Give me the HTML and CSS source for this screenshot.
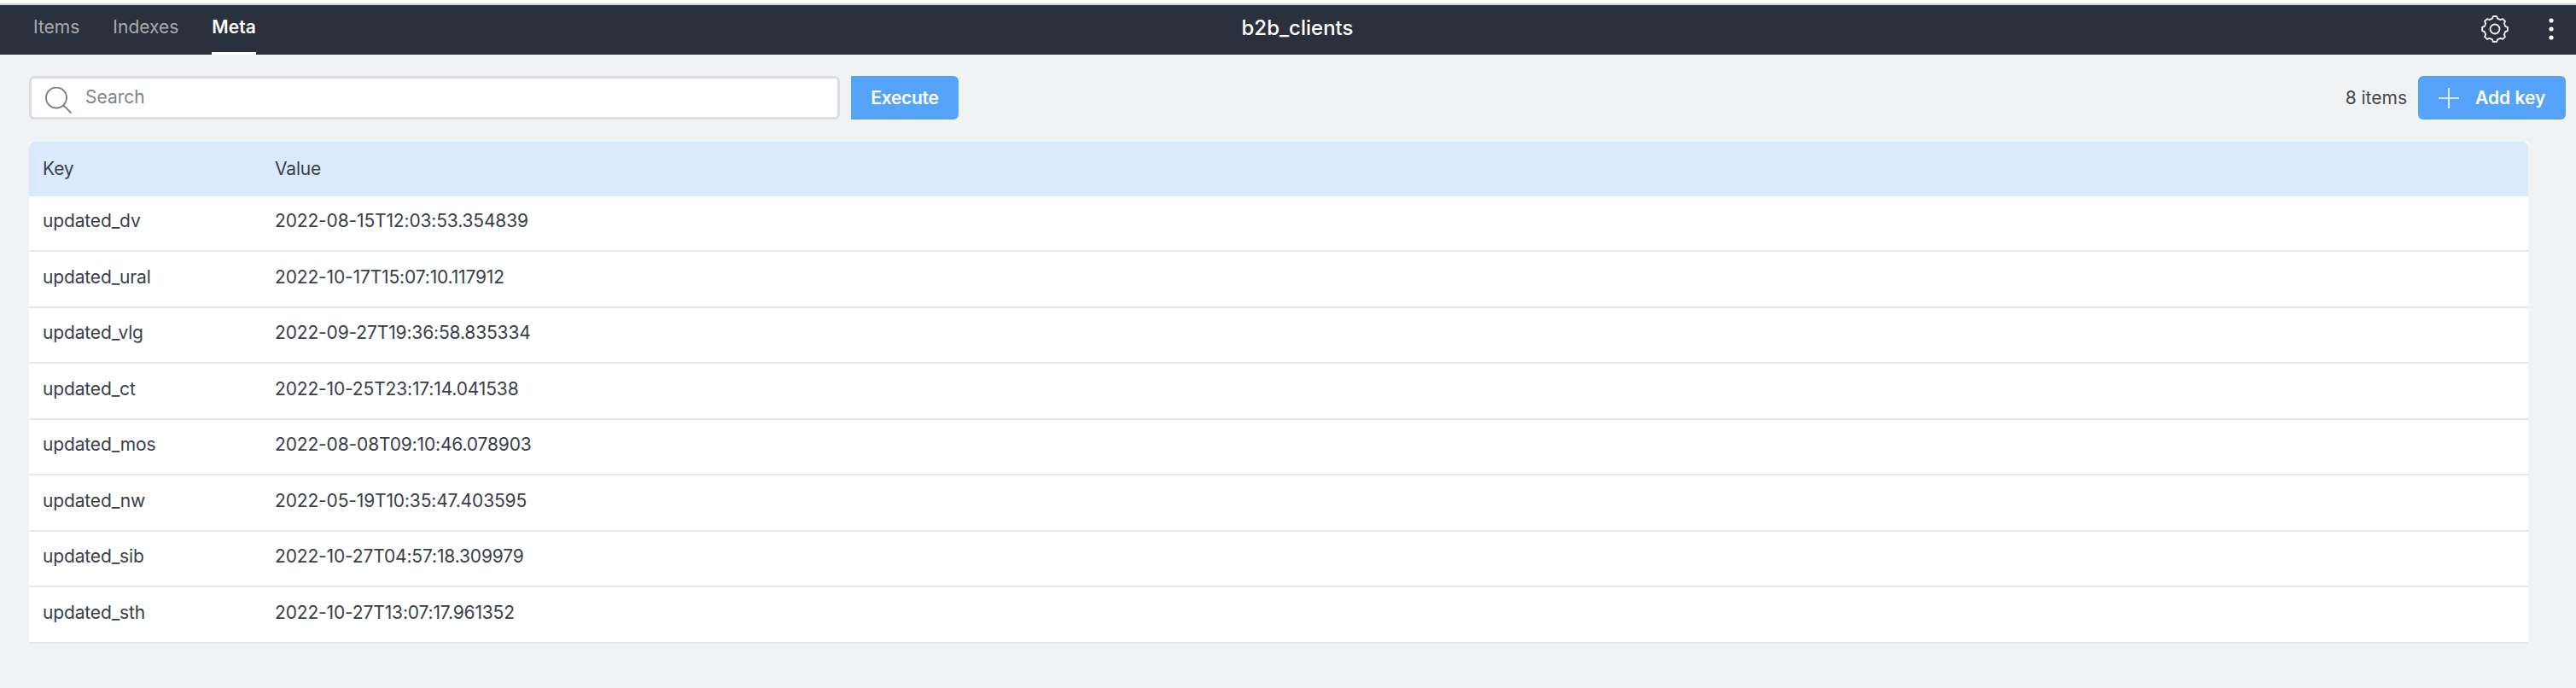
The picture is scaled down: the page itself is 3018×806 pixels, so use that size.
FILE: index.html
```html
<!DOCTYPE html>
<html lang="en">
<head>
<meta charset="utf-8">
<title>b2b_clients</title>
<link rel="stylesheet" href="styles.css">
</head>
<body>
<div class="topline"></div>
<header class="navbar">
  <nav class="tabs">
    <a class="tab">Items</a>
    <a class="tab">Indexes</a>
    <a class="tab active">Meta</a>
  </nav>
  <div class="title">b2b_clients</div>
  <div class="actions">
    <svg class="gear" viewBox="0 0 32 32" width="32" height="32" fill="none" stroke="#fff" stroke-width="1.8" stroke-linejoin="round">
      <path d="M28.23 12.95 L30.85 13.91 V18.09 L28.23 19.05 L26.8 22.49 L27.98 25.03 L25.03 27.98 L22.49 26.8 L19.05 28.23 L18.09 30.85 H13.91 L12.95 28.23 L9.51 26.8 L6.97 27.98 L4.02 25.03 L5.2 22.49 L3.77 19.05 L1.15 18.09 V13.91 L3.77 12.95 L5.2 9.51 L4.02 6.97 L6.97 4.02 L9.51 5.2 L12.95 3.77 L13.91 1.15 H18.09 L19.05 3.77 L22.49 5.2 L25.03 4.02 L27.98 6.97 L26.8 9.51 Z"/>
      <circle cx="16" cy="16" r="5.5"/>
    </svg>
    <svg class="dots" viewBox="0 0 6 26" width="6" height="26" fill="#fff">
      <circle cx="3" cy="3" r="2.6"/><circle cx="3" cy="13" r="2.6"/><circle cx="3" cy="23" r="2.6"/>
    </svg>
  </div>
</header>
<main class="content">
  <div class="toolbar">
    <label class="search">
      <svg class="search-icon" viewBox="0 0 31 31" width="31" height="31" fill="none" stroke="#7c818c" stroke-width="1.9">
        <circle cx="13" cy="12.5" r="12"/>
        <path d="M21.5 21.5 L30.5 30.5"/>
      </svg>
      <input class="search-input" type="text" placeholder="Search">
    </label>
    <button class="btn execute">Execute</button>
    <div class="spacer"></div>
    <span class="count">8 items</span>
    <button class="btn add">
      <svg viewBox="0 0 24 24" width="24" height="24" stroke="#fff" stroke-width="1.6" fill="none"><path d="M12 0 V24 M0 12 H24"/></svg>
      <span>Add key</span>
    </button>
  </div>
  <table class="grid">
    <thead>
      <tr><th class="col-key">Key</th><th>Value</th></tr>
    </thead>
    <tbody>
      <tr><td>updated_dv</td><td>2022-08-15T12:03:53.354839</td></tr>
      <tr><td>updated_ural</td><td>2022-10-17T15:07:10.117912</td></tr>
      <tr><td>updated_vlg</td><td>2022-09-27T19:36:58.835334</td></tr>
      <tr><td>updated_ct</td><td>2022-10-25T23:17:14.041538</td></tr>
      <tr><td>updated_mos</td><td>2022-08-08T09:10:46.078903</td></tr>
      <tr><td>updated_nw</td><td>2022-05-19T10:35:47.403595</td></tr>
      <tr><td>updated_sib</td><td>2022-10-27T04:57:18.309979</td></tr>
      <tr><td>updated_sth</td><td>2022-10-27T13:07:17.961352</td></tr>
    </tbody>
  </table>
</main>
</body>
</html>
```
FILE: styles.css
```css
* { box-sizing: border-box; }
html, body { margin: 0; height: 100%; }
body {
  background: #f1f2f4;
  font-family: Inter, "Liberation Sans", sans-serif;
  color: #2a303c;
  overflow: hidden;
}
.topline {
  height: 6px;
  background: #fff;
  border-bottom: 2px solid #d1d2d4;
}
.navbar {
  position: relative;
  height: 58px;
  background: #2a303c;
  display: flex;
  align-items: center;
  justify-content: space-between;
  padding: 0 26px 2px 39px;
}
.tabs { display: flex; gap: 39px; height: 58px; margin-bottom: -2px; }
.tab {
  height: 100%;
  display: flex;
  align-items: center;
  font-size: 21px;
  color: #a9acb2;
  padding-bottom: 4px;
  border-bottom: 3px solid transparent;
}
.tab.active {
  color: #fff;
  font-weight: 600;
  border-bottom-color: #fff;
}
.title {
  position: absolute;
  left: 1420px;
  top: 0;
  width: 200px;
  height: 58px;
  line-height: 54px;
  text-align: center;
  font-size: 24px;
  font-weight: 500;
  color: #fff;
}
.actions { display: flex; align-items: center; gap: 47px; }
.content { padding: 25px 12px 0 34px; }
.toolbar { display: flex; align-items: stretch; height: 51px; }
.search {
  width: 950px;
  display: flex;
  align-items: center;
  gap: 16px;
  background: #fff;
  border: 3px solid #dcdde0;
  border-radius: 6px;
  padding-left: 16px;
}
.search-icon { flex: none; margin-top: 6px; }
.search-input {
  flex: 1;
  min-width: 0;
  border: 0;
  outline: 0;
  background: transparent;
  font-family: inherit;
  font-size: 21px;
  padding: 0 0 2px;
}
.search-input::placeholder { color: #7e838d; opacity: 1; }
.btn {
  border: 0;
  background: #55a3fa;
  color: #fff;
  border-radius: 6px;
  font-family: inherit;
  font-size: 21px;
  font-weight: 600;
}
.execute {
  width: 126px;
  margin-left: 13px;
  padding: 0;
  letter-spacing: -0.3px;
  border-radius: 0 6px 6px 0;
}
.spacer { flex: 1; }
.count {
  align-self: center;
  font-size: 21px;
  color: #45484f;
  margin-right: 13px;
}
.add {
  width: 173px;
  display: flex;
  align-items: center;
  gap: 19px;
  padding: 0 0 0 24px;
}
.grid {
  width: 2928px;
  margin-top: 26px;
  border-collapse: separate;
  border-spacing: 0;
  table-layout: fixed;
  background: #fff;
  font-size: 21px;
  letter-spacing: -0.15px;
  color: #383e4a;
}
.grid th {
  height: 64px;
  background: #dbe9fc;
  font-weight: 400;
  text-align: left;
  padding: 0 16px 2px;
}
.grid th:first-child { border-top-left-radius: 6px; }
.grid th:last-child { border-top-right-radius: 6px; }
.col-key { width: 272px; }
.grid td {
  height: 66px;
  padding: 0 16px 6px;
  border-bottom: 2px solid #e7e8ea;
}
.grid tbody tr:nth-child(odd) td { height: 65px; }
```
